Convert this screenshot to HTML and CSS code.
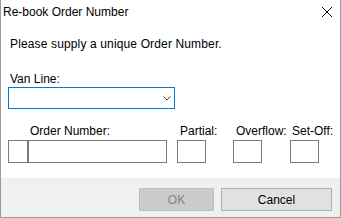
FILE: index.html
```html
<!DOCTYPE html>
<html>
<head>
<meta charset="utf-8">
<link rel="stylesheet" href="styles.css">
</head>
<body>
<div class="window">
  <div class="titlebar">
    <span class="title">Re-book Order Number</span>
    <svg class="close" width="10" height="10" viewBox="0 0 10 10"><path d="M0 0 L10 10 M10 0 L0 10" stroke="#000" stroke-width="1" fill="none"/></svg>
  </div>
  <div class="content">
    <p class="msg">Please supply a unique Order Number.</p>
    <div class="label vanline">Van Line:</div>
    <div class="combo">
      <svg class="chevron" width="8" height="5" viewBox="0 0 8 5"><path d="M0.5 0.5 L4 4 L7.5 0.5" stroke="#444" stroke-width="1" fill="none"/></svg>
    </div>
    <div class="fields">
      <div class="field f-order">
        <div class="flabel">Order Number:</div>
        <div class="order-boxes"><div class="box prefix"></div><div class="box number"></div></div>
      </div>
      <div class="field f-partial">
        <div class="flabel">Partial:</div>
        <div class="box small"></div>
      </div>
      <div class="field f-overflow">
        <div class="flabel">Overflow:</div>
        <div class="box small"></div>
      </div>
      <div class="field f-setoff">
        <div class="flabel">Set-Off:</div>
        <div class="box small"></div>
      </div>
    </div>
  </div>
  <div class="footer">
    <button class="btn ok" disabled>OK</button>
    <button class="btn cancel">Cancel</button>
  </div>
</div>
</body>
</html>
```
FILE: styles.css
```css
html, body {
  margin: 0;
  padding: 0;
  background: #ffffff;
}
body {
  font-family: "Liberation Sans", Arial, sans-serif;
  font-size: 12px;
  line-height: 14px;
  color: #000;
}
.window {
  width: 341px;
  height: 218px;
  box-sizing: border-box;
  border: 1px solid #9a9a9a;
  border-top: none;
  display: flex;
  flex-direction: column;
  background: #fff;
}
.titlebar {
  height: 28px;
  flex: none;
  display: flex;
  justify-content: space-between;
  align-items: flex-start;
}
.title {
  padding-left: 2px;
  padding-top: 5px;
}
.close {
  margin-top: 7px;
  margin-right: 8px;
}
.content {
  flex: 1;
  padding-left: 7px;
}
.msg {
  margin: 9px 0 0 0;
  padding-left: 2px;
  letter-spacing: 0.14px;
}
.label {
  padding-left: 2px;
}
.vanline {
  margin-top: 21px;
}
.combo {
  margin-top: 1px;
  width: 167px;
  height: 22px;
  box-sizing: border-box;
  border: 1px solid #0078d7;
  display: flex;
  justify-content: flex-end;
  align-items: center;
  padding-right: 3px;
  padding-top: 1px;
}
.fields {
  display: flex;
  margin-top: 15px;
}
.field {
  flex: none;
  width: 29px;
  white-space: nowrap;
}
.flabel {
  height: 14px;
  margin-bottom: 2px;
}
.f-order {
  width: 159px;
}
.f-order .flabel { padding-left: 22px; }
.f-partial { margin-left: 10px; }
.f-partial .flabel { padding-left: 3px; }
.f-overflow { margin-left: 27px; }
.f-overflow .flabel { padding-left: 3px; }
.f-setoff { margin-left: 28px; }
.f-setoff .flabel { padding-left: 2px; }
.order-boxes {
  display: flex;
}
.box {
  height: 23px;
  box-sizing: border-box;
  border: 1px solid #7a7a7a;
  background: #fff;
}
.prefix { width: 20px; }
.number { width: 139px; }
.small { width: 29px; }
.footer {
  flex: none;
  height: 39px;
  background: #f0f0f0;
  display: flex;
  justify-content: flex-end;
  align-items: flex-start;
  padding: 10px 8px 0 0;
  box-sizing: border-box;
  gap: 7px;
}
.btn {
  height: 23px;
  margin: 0;
  padding: 0;
  font-family: "Liberation Sans", Arial, sans-serif;
  font-size: 12px;
  line-height: 14px;
  box-sizing: border-box;
}
.ok {
  width: 75px;
  background: #cccccc;
  border: 1px solid #bfbfbf;
  color: #838383;
}
.cancel {
  width: 111px;
  background: #e1e1e1;
  border: 1px solid #adadad;
  color: #000;
}
```
